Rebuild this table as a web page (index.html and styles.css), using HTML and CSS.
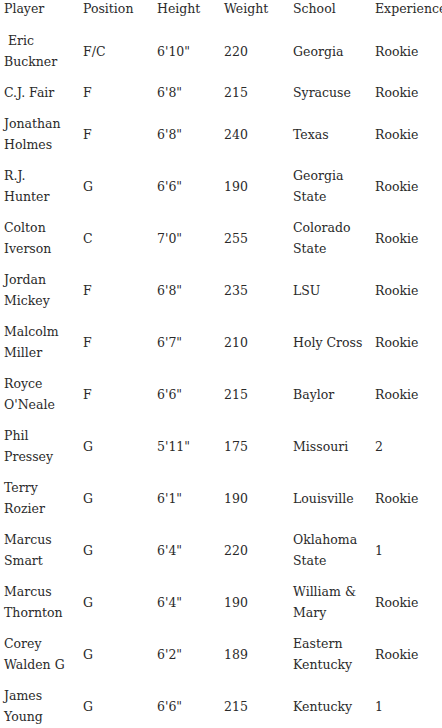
FILE: index.html
```html
<!DOCTYPE html>
<html>
<head>
<meta charset="utf-8">
<link rel="stylesheet" href="styles.css">
</head>
<body>
<table class="roster">
  <colgroup>
    <col class="c-player"><col class="c-pos"><col class="c-height"><col class="c-weight"><col class="c-school"><col class="c-exp">
  </colgroup>
  <thead>
    <tr><th>Player</th><th>Position</th><th>Height</th><th>Weight</th><th>School</th><th>Experience</th></tr>
  </thead>
  <tbody>
    <tr><td>&nbsp;Eric Buckner</td><td>F/C</td><td>6'10"</td><td>220</td><td>Georgia</td><td>Rookie</td></tr>
    <tr><td>C.J. Fair</td><td>F</td><td>6'8"</td><td>215</td><td>Syracuse</td><td>Rookie</td></tr>
    <tr><td>Jonathan Holmes</td><td>F</td><td>6'8"</td><td>240</td><td>Texas</td><td>Rookie</td></tr>
    <tr><td>R.J. Hunter</td><td>G</td><td>6'6"</td><td>190</td><td>Georgia State</td><td>Rookie</td></tr>
    <tr><td>Colton Iverson</td><td>C</td><td>7'0"</td><td>255</td><td>Colorado State</td><td>Rookie</td></tr>
    <tr><td>Jordan Mickey</td><td>F</td><td>6'8"</td><td>235</td><td>LSU</td><td>Rookie</td></tr>
    <tr><td>Malcolm Miller</td><td>F</td><td>6'7"</td><td>210</td><td>Holy Cross</td><td>Rookie</td></tr>
    <tr><td>Royce O'Neale</td><td>F</td><td>6'6"</td><td>215</td><td>Baylor</td><td>Rookie</td></tr>
    <tr><td>Phil Pressey</td><td>G</td><td>5'11"</td><td>175</td><td>Missouri</td><td>2</td></tr>
    <tr><td>Terry Rozier</td><td>G</td><td>6'1"</td><td>190</td><td>Louisville</td><td>Rookie</td></tr>
    <tr><td>Marcus Smart</td><td>G</td><td>6'4"</td><td>220</td><td>Oklahoma State</td><td>1</td></tr>
    <tr><td>Marcus Thornton</td><td>G</td><td>6'4"</td><td>190</td><td>William &amp; Mary</td><td>Rookie</td></tr>
    <tr><td>Corey Walden G</td><td>G</td><td>6'2"</td><td>189</td><td>Eastern Kentucky</td><td>Rookie</td></tr>
    <tr><td>James Young</td><td>G</td><td>6'6"</td><td>215</td><td>Kentucky</td><td>1</td></tr>
  </tbody>
</table>
</body>
</html>
```
FILE: styles.css
```css
html, body {
  margin: 0;
  padding: 0;
  background: #fff;
  overflow: hidden;
}
.roster {
  table-layout: fixed;
  border-collapse: collapse;
  width: 452px;
  margin-top: -2px;
  font-family: "DejaVu Serif", Georgia, serif;
  font-size: 12.5px;
  line-height: 21px;
  color: #2a2a2a;
  font-variant-numeric: oldstyle-nums;
}
.c-player { width: 79px; }
.c-pos { width: 74px; }
.c-height { width: 67px; }
.c-weight { width: 69px; }
.c-school { width: 82px; }
.c-exp { width: 81px; }
.roster th {
  font-weight: normal;
  text-align: left;
  padding: 0 4px 6px 4px;
  white-space: nowrap;
  vertical-align: middle;
}
.roster td {
  padding: 5px 4px;
  vertical-align: middle;
  text-align: left;
}
.roster td:first-child {
  padding-right: 9px;
}
```
